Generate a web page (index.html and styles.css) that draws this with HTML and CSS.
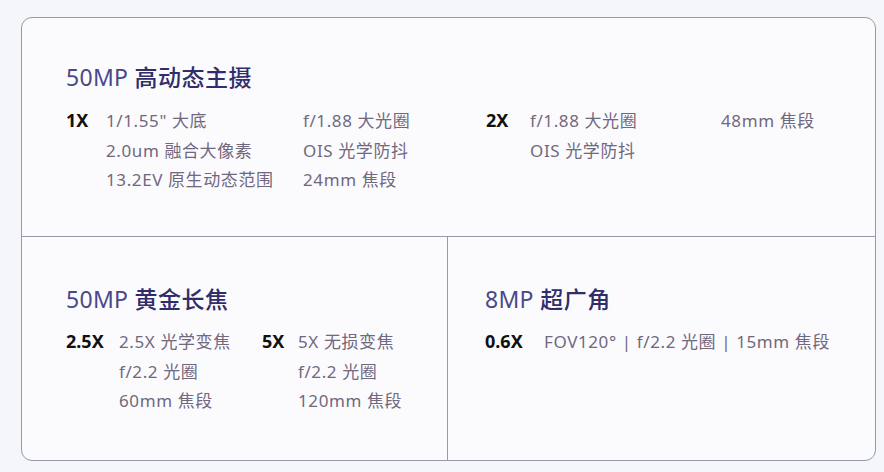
FILE: index.html
```html
<!DOCTYPE html>
<html lang="zh-CN">
<head>
<meta charset="utf-8">
<link rel="stylesheet" href="styles.css">
</head>
<body>
<div class="card">
  <section class="cell cell-top">
    <h2 class="title"><span class="num">50MP</span> <span class="zh">高动态主摄</span></h2>
    <div class="top-groups">
      <div class="grp">
        <div class="lbl w40">1X</div>
        <ul class="col c197">
          <li>1/1.55" 大底</li>
          <li>2.0um 融合大像素</li>
          <li>13.2EV 原生动态范围</li>
        </ul>
        <ul class="col">
          <li>f/1.88 大光圈</li>
          <li>OIS 光学防抖</li>
          <li>24mm 焦段</li>
        </ul>
      </div>
      <div class="grp">
        <div class="lbl w44">2X</div>
        <ul class="col c191">
          <li>f/1.88 大光圈</li>
          <li>OIS 光学防抖</li>
        </ul>
        <ul class="col">
          <li>48mm 焦段</li>
        </ul>
      </div>
    </div>
  </section>
  <section class="cell cell-bl">
    <h2 class="title"><span class="num">50MP</span> <span class="zh">黄金长焦</span></h2>
    <div class="grp">
      <div class="lbl w53">2.5X</div>
      <ul class="col c143">
        <li>2.5X 光学变焦</li>
        <li>f/2.2 光圈</li>
        <li>60mm 焦段</li>
      </ul>
      <div class="lbl w36">5X</div>
      <ul class="col">
        <li>5X 无损变焦</li>
        <li>f/2.2 光圈</li>
        <li>120mm 焦段</li>
      </ul>
    </div>
  </section>
  <section class="cell cell-br">
    <h2 class="title"><span class="num">8MP</span> <span class="zh">超广角</span></h2>
    <div class="grp">
      <div class="lbl w59">0.6X</div>
      <ul class="col">
        <li>FOV120° | f/2.2 光圈 | 15mm 焦段</li>
      </ul>
    </div>
  </section>
</div>
</body>
</html>
```

FILE: styles.css
```css
* { box-sizing: border-box; }
html, body { margin: 0; padding: 0; }
body {
  background: #f5f6f9;
  font-family: "Noto Sans", "Noto Sans CJK SC", sans-serif;
  width: 884px;
  height: 472px;
  overflow: hidden;
}
.card {
  margin: 17px 0 0 21px;
  width: 855px;
  height: 444px;
  border: 1px solid #979aa8;
  border-radius: 11px;
  background: #fbfbfe;
  display: grid;
  grid-template-columns: 426px 1fr;
  grid-template-rows: 219px 1fr;
  overflow: hidden;
}
.cell-top {
  grid-column: 1 / 3;
  border-bottom: 1px solid #979aa8;
  padding: 42px 0 0 44px;
}
.cell-bl {
  border-right: 1px solid #979aa8;
  padding: 45px 0 0 44px;
}
.cell-br {
  padding: 45px 0 0 37px;
}
.title {
  margin: 0;
  font-size: 23px;
  line-height: 32px;
  font-weight: 400;
  color: #4a4889;
  letter-spacing: 0.3px;
}
.title .zh {
  font-family: "Noto Sans CJK SC", sans-serif;
  font-weight: 500;
  color: #302d6a;
  letter-spacing: 0.5px;
}
.cell-top .title { margin-bottom: 13px; }
.cell-bl .title, .cell-br .title { margin-bottom: 12px; }
.top-groups {
  display: grid;
  grid-template-columns: 420px 1fr;
}
.grp {
  display: flex;
  align-items: flex-start;
}
.lbl {
  font-size: 18px;
  font-weight: 700;
  line-height: 29.5px;
  color: #111;
  flex: none;
}
.w36 { width: 36px; }
.w40 { width: 40px; }
.w44 { width: 44px; }
.w53 { width: 53px; }
.w59 { width: 59px; }
.col {
  list-style: none;
  margin: 0;
  padding: 0;
  font-size: 17px;
  line-height: 29.5px;
  color: #71687e;
  letter-spacing: 0.6px;
  white-space: nowrap;
  flex: none;
}
.c143 { width: 143px; }
.c191 { width: 191px; }
.c197 { width: 197px; }
```
